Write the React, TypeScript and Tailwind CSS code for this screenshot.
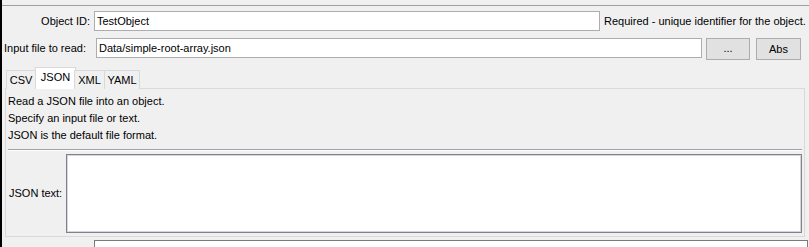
const tabs = [
  { label: "CSV", w: "w-[30px]" },
  { label: "JSON", w: "" },
  { label: "XML", w: "w-[31px]" },
  { label: "YAML", w: "w-[36px]" },
]

const App = () => {
  return (
    <div
      className="w-[809px] h-[247px] overflow-hidden bg-[#f0f0f0] border-l-2 border-black text-[11px] text-black leading-none"
      style={{ fontFamily: '"Liberation Sans", Arial, sans-serif' }}
    >
      <div className="h-[5px]" />
      <div className="border-t border-[#a0a0a0]" />

      {/* Object ID row */}
      <div className="flex items-center mt-[5px] h-[20px]">
        <span className="w-[88px] text-right">Object ID:</span>
        <div className="ml-[4px] w-[506px] h-[20px] bg-white border border-[#adadad] flex items-center pl-[2px]">TestObject</div>
        <span className="ml-[4px] whitespace-nowrap">Required - unique identifier for the object.</span>
      </div>

      {/* input file row */}
      <div className="flex items-start mt-[7px]">
        <span className="w-[92px] pl-[2px] h-[20px] flex items-center whitespace-nowrap">Input file to read:</span>
        <div className="ml-[2px] w-[606px] h-[20px] bg-white border border-[#adadad] flex items-center pl-[2px]">Data/simple-root-array.json</div>
        <button className="ml-[4px] w-[44px] h-[22px] bg-[#e1e1e1] border border-[#adadad] flex items-center justify-center pb-[2px]">...</button>
        <button className="ml-[6px] w-[45px] h-[22px] bg-[#e1e1e1] border border-[#adadad] flex items-center justify-center">Abs</button>
      </div>

      {/* tabs */}
      <div className="flex items-end ml-[4px] mt-[7px] h-[22px] relative z-10">
        {tabs.map((t) =>
          t.label === "JSON" ? (
            <div key={t.label} className="h-[22px] w-[41px] -mx-[1px] bg-white border border-b-0 border-[#d9d9d9] flex items-center justify-center pb-[3px]">
              {t.label}
            </div>
          ) : (
            <div key={t.label} className={`${t.w} h-[19px] bg-[#f0f0f0] border border-b-0 border-[#d9d9d9] -ml-px first:ml-0 flex items-center justify-center`}>
              {t.label}
            </div>
          )
        )}
      </div>

      {/* tab panel */}
      <div className="ml-[3px] w-[800px] h-[149px] -mt-px border border-[#d9d9d9] bg-[#f0f0f0] px-[2px] pt-[7px]">
        <div className="flex flex-col gap-[6px]">
          <span className="h-[11px]">Read a JSON file into an object.</span>
          <span className="h-[11px]">Specify an input file or text.</span>
          <span className="h-[11px]">JSON is the default file format.</span>
        </div>
        <div className="mt-[8px] border-t border-[#a0a0a0] border-b border-b-white" />
        <div className="flex items-center mt-[3px]">
          <span className="w-[58px] pl-[1px]">JSON text:</span>
          <div className="w-[737px] h-[79px] bg-white border border-[#7f828a] shadow-[inset_0_0_0_1px_#d4d6da]" />
        </div>
      </div>

      <div className="ml-[92px] mt-[3px] w-[714px] h-[20px] bg-white border border-[#7a7a7a]" />
    </div>
  )
}

export default App
